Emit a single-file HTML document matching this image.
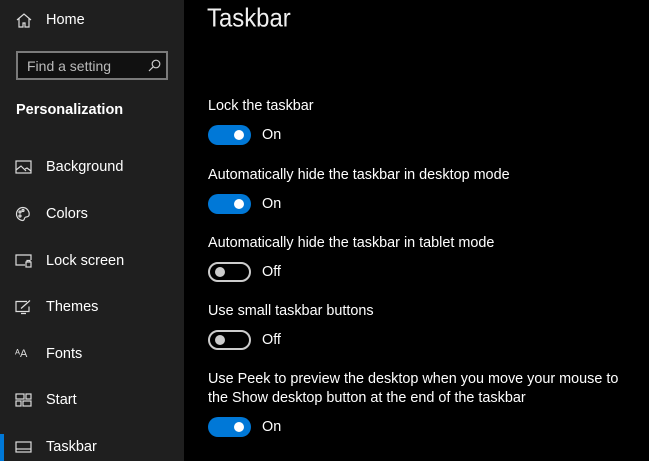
<!DOCTYPE html>
<html><head><style>
body{margin:0;width:649px;height:461px;overflow:hidden;background:#000;font-family:"Liberation Sans",sans-serif;color:#fff;position:relative}
.side{position:absolute;left:0;top:0;width:184px;height:461px;background:#1f1f1f}
.a{position:absolute;white-space:nowrap}
.it{position:absolute;left:46px;font-size:14.5px;color:#fff;transform:translateY(-50%)}
.ic{position:absolute;left:15px;transform:translateY(-50%)}
.lbl{position:absolute;left:208px;font-size:14.4px;color:#fff;transform:translateY(-50%);white-space:nowrap}
.tg{position:absolute;left:208px;width:43px;height:20px;box-sizing:border-box;border-radius:10px;transform:translateY(-50%)}
.on{background:#0078d7}
.on::after{content:"";position:absolute;right:7px;top:5px;width:10px;height:10px;border-radius:50%;background:#fff}
.off{border:2px solid #ccc}
.off::after{content:"";position:absolute;left:5px;top:3px;width:10px;height:10px;border-radius:50%;background:#ccc}
.st{position:absolute;left:262px;font-size:14.4px;transform:translateY(-50%)}
</style></head><body>
<div class="side">
<svg class="ic" style="top:20px" width="18" height="16" viewBox="0 0 18 16" fill="none" stroke="#ddd" stroke-width="1.2"><path d="M2 8L9 2l7 6M4 6.5V15h4v-4h2v4h4V6.5"/></svg>
<div class="it" style="top:20px">Home</div>
<div class="a" style="left:16px;top:51px;width:152px;height:29px;box-sizing:border-box;border:2px solid #7a7a7a;background:#111"></div>
<div class="a" style="left:27px;top:66px;transform:translateY(-50%);font-size:14px;color:#bbb">Find a setting</div>
<svg class="a" style="left:148px;top:59px" width="13" height="13" viewBox="0 0 13 13" fill="none" stroke="#ccc" stroke-width="1.2"><circle cx="8" cy="5" r="3.8"/><path d="M5.3 7.7L1 12"/></svg>
<div class="a" style="left:16px;top:110px;transform:translateY(-50%);font-size:14.5px;font-weight:bold">Personalization</div>
<svg class="ic" style="top:167px" width="17" height="14" viewBox="0 0 17 14" fill="none" stroke="#ddd" stroke-width="1.2"><rect x="1" y="1" width="15" height="12"/><path d="M1 10l5-4 5 5M10 9l2-1 4 3"/></svg>
<div class="it" style="top:167px">Background</div>
<svg class="ic" style="top:214px" width="16" height="16" viewBox="0 0 16 16" fill="none" stroke="#ddd" stroke-width="1.2"><path d="M8 1.5a6.5 6.5 0 1 0 0 13c1.5 0 1-2 2-3s3 0 4-2A6.5 6.5 0 0 0 8 1.5z"/><circle cx="5" cy="6" r="1"/><circle cx="8" cy="4.5" r="1"/><circle cx="5" cy="10" r="1"/></svg>
<div class="it" style="top:214px">Colors</div>
<svg class="ic" style="top:261px" width="17" height="14" viewBox="0 0 17 14" fill="none" stroke="#ddd" stroke-width="1.2"><path d="M10 11H1V1h15v5"/><rect x="11" y="8" width="5" height="5"/><path d="M12 8V6.5h3V8"/></svg>
<div class="it" style="top:261px">Lock screen</div>
<svg class="ic" style="top:307px" width="17" height="15" viewBox="0 0 17 15" fill="none" stroke="#ddd" stroke-width="1.2"><path d="M12 2H1v10h13V7M6 14h5M6 9l9-8"/></svg>
<div class="it" style="top:307px">Themes</div>
<div class="a" style="left:15px;top:354px;transform:translateY(-50%);font-size:11px;color:#ddd">ᴬA</div>
<div class="it" style="top:354px">Fonts</div>
<svg class="ic" style="top:400px" width="17" height="14" viewBox="0 0 17 14" fill="none" stroke="#ddd" stroke-width="1.2"><rect x="1" y="1" width="8" height="5"/><rect x="11" y="1" width="5" height="5"/><rect x="1" y="8" width="5" height="5"/><rect x="8" y="8" width="8" height="5"/></svg>
<div class="it" style="top:400px">Start</div>
<div class="a" style="left:0;top:434px;width:4px;height:27px;background:#0078d7"></div>
<svg class="ic" style="top:447px" width="17" height="12" viewBox="0 0 17 12" fill="none" stroke="#ddd" stroke-width="1.2"><rect x="1" y="1" width="15" height="10"/><path d="M1 8h15"/></svg>
<div class="it" style="top:447px">Taskbar</div>
</div>
<div class="a" style="left:207px;top:18px;transform:translateY(-50%);font-size:26px;color:#f0f0f0;transform:translateY(-50%) scaleX(0.92);transform-origin:left center">Taskbar</div>
<div class="lbl" style="top:106px">Lock the taskbar</div>
<div class="tg on" style="top:135px"></div><div class="st" style="top:135px">On</div>
<div class="lbl" style="top:175px">Automatically hide the taskbar in desktop mode</div>
<div class="tg on" style="top:204px"></div><div class="st" style="top:204px">On</div>
<div class="lbl" style="top:243px">Automatically hide the taskbar in tablet mode</div>
<div class="tg off" style="top:272px"></div><div class="st" style="top:272px">Off</div>
<div class="lbl" style="top:311px">Use small taskbar buttons</div>
<div class="tg off" style="top:340px"></div><div class="st" style="top:340px">Off</div>
<div class="lbl" style="top:379px">Use Peek to preview the desktop when you move your mouse to</div>
<div class="lbl" style="top:398px">the Show desktop button at the end of the taskbar</div>
<div class="tg on" style="top:427px"></div><div class="st" style="top:427px">On</div>
</body></html>
